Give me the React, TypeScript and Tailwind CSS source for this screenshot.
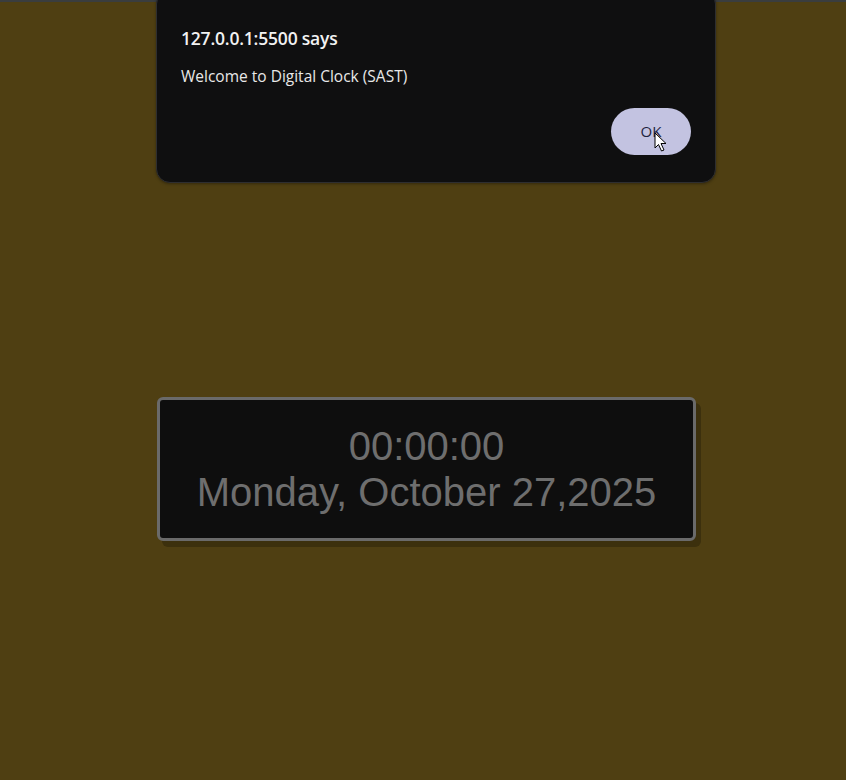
export default function App() {
  return (
    <div className="relative min-h-[780px] w-full bg-[#4f3f12] border-t-2 border-[#3a3d3e]">
      {/* Alert dialog */}
      <div className="absolute left-[156px] top-[-12px] w-[560px] h-[193px] rounded-[14px] bg-[#0f0f10] border border-[#2e2e30] shadow-[0_1px_3px_rgba(0,0,0,0.35)] px-6 pt-[39px] font-['Open_Sans',sans-serif]">
        <div className="text-[17.5px] font-semibold leading-none tracking-[-0.2px] text-[#f2f2f2]">127.0.0.1:5500 says</div>
        <div className="mt-[21px] text-[15.5px] leading-none text-[#e8e8e8]">Welcome to Digital Clock (SAST)</div>
        <div className="absolute right-[24px] bottom-[27px] flex h-[47px] w-[80px] items-center justify-center rounded-full bg-[#c3c3e1] text-[15px] text-[#1e2440]">
          OK
          <svg className="absolute left-[43px] top-[24px]" width="14" height="20" viewBox="0 0 14 20">
            <path d="M1 1 L1 16 L4.5 12.5 L7.5 19 L10 18 L7 11.5 L12 11.5 Z" fill="#fff" stroke="#000" strokeWidth="1" />
          </svg>
        </div>
      </div>

      {/* Clock */}
      <div className="absolute left-[157px] top-[395px] w-[539px] h-[144px] rounded-[6px] border-[3px] border-[#6a6a6a] bg-[#0e0e0e] shadow-[5px_6px_0_#3c300d] flex flex-col items-center justify-center font-['Liberation_Sans',Arial,sans-serif] text-[40px] leading-[46px] text-[#6e6e6e]">
        <div>00:00:00</div>
        <div>Monday, October 27,2025</div>
      </div>
    </div>
  );
}
